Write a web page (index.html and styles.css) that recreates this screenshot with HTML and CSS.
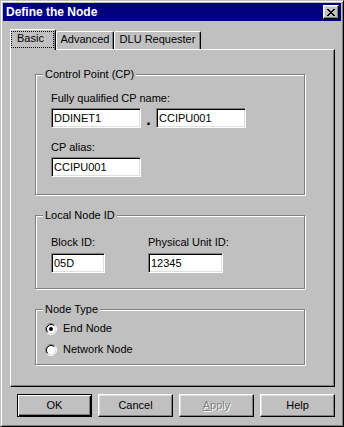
FILE: index.html
```html
<!DOCTYPE html>
<html>
<head>
<meta charset="utf-8">
<link rel="stylesheet" href="styles.css">
</head>
<body>
<div class="window">
  <div class="titlebar">
    <span class="title">Define the Node</span>
    <div class="close">
      <svg width="8" height="7" viewBox="0 0 8 7" shape-rendering="crispEdges"><path fill="#000" d="M0 0h2v1H0zM6 0h2v1H6zM1 1h2v1H1zM5 1h2v1H5zM2 2h4v1H2zM3 3h2v1H3zM2 4h4v1H2zM1 5h2v1H1zM5 5h2v1H5zM0 6h2v1H0zM6 6h2v1H6z"/></svg>
    </div>
  </div>
  <div class="tabs">
    <div class="tab active"><span class="focus">Basic</span></div>
    <div class="tab adv">Advanced</div>
    <div class="tab dlu">DLU Requester</div>
  </div>
  <div class="panel">
    <div class="group g1">
      <span class="legend">Control Point (CP)</span>
      <div class="label">Fully qualified CP name:</div>
      <div class="row">
        <div class="input w90">DDINET1</div>
        <span class="dot">.</span>
        <div class="input w90">CCIPU001</div>
      </div>
      <div class="label gap">CP alias:</div>
      <div class="input w90">CCIPU001</div>
    </div>
    <div class="group g2">
      <span class="legend">Local Node ID</span>
      <div class="cols">
        <div class="col c1">
          <div class="label">Block ID:</div>
          <div class="input w54">05D</div>
        </div>
        <div class="col">
          <div class="label">Physical Unit ID:</div>
          <div class="input w75">12345</div>
        </div>
      </div>
    </div>
    <div class="group g3">
      <span class="legend">Node Type</span>
      <div class="radio-row">
        <svg class="radio" width="12" height="12" viewBox="0 0 12 12">
          <circle cx="6" cy="6" r="4.5" fill="#fff"/>
          <path d="M2.11 9.89A5.5 5.5 0 0 1 9.89 2.11" fill="none" stroke="#808080"/>
          <path d="M9.89 2.11A5.5 5.5 0 0 1 2.11 9.89" fill="none" stroke="#fff"/>
          <path d="M2.82 9.18A4.5 4.5 0 0 1 9.18 2.82" fill="none" stroke="#000"/>
          <path d="M9.18 2.82A4.5 4.5 0 0 1 2.82 9.18" fill="none" stroke="#dfdfdf"/>
          <circle cx="6" cy="6" r="2" fill="#000"/>
        </svg>
        <span>End Node</span>
      </div>
      <div class="radio-row">
        <svg class="radio" width="12" height="12" viewBox="0 0 12 12">
          <circle cx="6" cy="6" r="4.5" fill="#fff"/>
          <path d="M2.11 9.89A5.5 5.5 0 0 1 9.89 2.11" fill="none" stroke="#808080"/>
          <path d="M9.89 2.11A5.5 5.5 0 0 1 2.11 9.89" fill="none" stroke="#fff"/>
          <path d="M2.82 9.18A4.5 4.5 0 0 1 9.18 2.82" fill="none" stroke="#000"/>
          <path d="M9.18 2.82A4.5 4.5 0 0 1 2.82 9.18" fill="none" stroke="#dfdfdf"/>
        </svg>
        <span>Network Node</span>
      </div>
    </div>
  </div>
  <div class="buttons">
    <div class="btn default">OK</div>
    <div class="btn">Cancel</div>
    <div class="btn disabled"><span><u>A</u>pply</span></div>
    <div class="btn">Help</div>
  </div>
</div>
</body>
</html>
```

FILE: styles.css
```css
body {
  margin: 0;
  background: #c0c0c0;
  font-family: "Liberation Sans", Arial, sans-serif;
  font-size: 11px;
  line-height: 13px;
  color: #000;
}

.window {
  width: 344px;
  height: 427px;
  box-sizing: border-box;
  border: 1px solid;
  border-color: #c0c0c0 #000 #000 #c0c0c0;
  box-shadow: inset 1px 1px #fff, inset -1px -1px #808080;
  padding: 2px;
  background: #c0c0c0;
}

.titlebar {
  height: 18px;
  background: #000080;
  display: flex;
  align-items: center;
  justify-content: space-between;
  padding: 0 2px 0 3px;
  color: #fff;
}

.title {
  font-weight: bold;
  font-size: 12px;
  line-height: 14px;
}

.close {
  width: 16px;
  height: 14px;
  box-sizing: border-box;
  border: 1px solid;
  border-color: #fff #000 #000 #fff;
  box-shadow: inset -1px -1px #808080, inset 1px 1px #dfdfdf;
  background: #c0c0c0;
  display: flex;
  align-items: center;
  justify-content: center;
}

.close svg {
  display: block;
}

.tabs {
  display: flex;
  align-items: flex-end;
  height: 20px;
  margin-top: 8px;
  padding-left: 7px;
}

.tab {
  height: 18px;
  box-sizing: border-box;
  border: 1px solid;
  border-color: #fff #000 transparent #fff;
  border-bottom: 0;
  border-radius: 2px 2px 0 0;
  box-shadow: inset -1px 0 #808080;
  text-align: center;
  white-space: nowrap;
  padding-top: 1px;
}

.tab.adv {
  width: 58px;
}

.tab.dlu {
  width: 87px;
}

.tab.active {
  width: 46px;
  height: 21px;
  margin-bottom: -1px;
  position: relative;
  z-index: 1;
  background: #c0c0c0;
  text-align: left;
}

.focus {
  display: block;
  width: 43px;
  height: 17px;
  box-sizing: border-box;
  border: 1px dotted #000;
  line-height: 12px;
  padding-left: 5px;
}

.panel {
  width: 325px;
  height: 338px;
  box-sizing: border-box;
  margin-left: 7px;
  border: 1px solid;
  border-color: #fff #000 #000 #fff;
  box-shadow: inset -1px -1px #808080;
  padding: 24px 0 0 24px;
}

.group {
  position: relative;
  width: 270px;
  box-sizing: border-box;
  border: 1px solid #808080;
  box-shadow: inset 1px 1px #fff, 1px 1px #fff;
}

.legend {
  position: absolute;
  top: -7px;
  left: 7px;
  padding: 0 2px;
  background: #c0c0c0;
  white-space: nowrap;
}

.g1 {
  padding: 17px 0 17px 15px;
}

.g2 {
  margin-top: 20px;
  padding: 20px 0 15px 15px;
}

.g3 {
  margin-top: 20px;
  padding: 10px 0 6px 9px;
}

.label {
  margin-bottom: 3px;
  white-space: nowrap;
}

.label.gap {
  margin-top: 13px;
}

.g2 .label {
  margin-bottom: 4px;
}

.row {
  display: flex;
}

.dot {
  width: 15px;
  display: flex;
  align-items: flex-end;
  justify-content: center;
  font-weight: bold;
  font-size: 16px;
  line-height: 16px;
}

.input {
  height: 20px;
  box-sizing: border-box;
  border: 1px solid;
  border-color: #808080 #fff #fff #808080;
  box-shadow: inset 1px 1px #000, inset -1px -1px #dfdfdf;
  background: #fff;
  padding: 1px 0 0 2px;
  line-height: 16px;
  white-space: nowrap;
}

.w90 {
  width: 90px;
}

.w54 {
  width: 54px;
}

.w75 {
  width: 75px;
}

.cols {
  display: flex;
}

.col.c1 {
  width: 97px;
}

.radio-row {
  display: flex;
  align-items: center;
  gap: 6px;
  height: 17px;
}

.radio-row + .radio-row {
  margin-top: 4px;
}

.radio {
  display: block;
}

.buttons {
  display: flex;
  gap: 6px;
  margin-top: 7px;
  padding-left: 14px;
}

.btn {
  width: 75px;
  height: 23px;
  box-sizing: border-box;
  border: 1px solid;
  border-color: #fff #000 #000 #fff;
  box-shadow: inset -1px -1px #808080, inset 1px 1px #dfdfdf;
  display: flex;
  align-items: center;
  justify-content: center;
}

.btn.default {
  border-color: #000;
  box-shadow: inset 1px 1px #fff, inset -1px -1px #000, inset -2px -2px #808080;
}

.btn.disabled {
  color: #808080;
  text-shadow: 1px 1px 0 #fff;
}
```
